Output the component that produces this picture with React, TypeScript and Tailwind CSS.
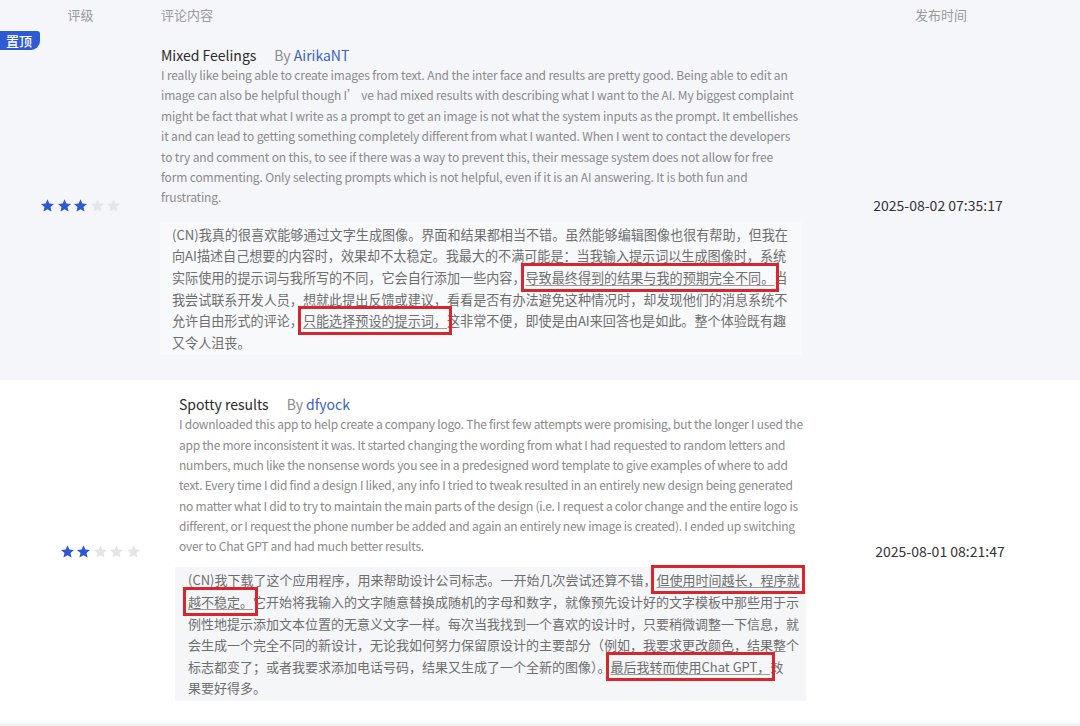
type Seg = { t: string; hl?: boolean };

type Review = {
  title: string;
  author: string;
  rating: number;
  date: string;
  pinned?: boolean;
  en: string[];
  cn: Seg[][];
};

const reviews: Review[] = [
  {
    title: "Mixed Feelings",
    author: "AirikaNT",
    rating: 3,
    date: "2025-08-02 07:35:17",
    pinned: true,
    en: [
      "I really like being able to create images from text. And the inter face and results are pretty good. Being able to edit an",
      "image can also be helpful though I’ ve had mixed results with describing what I want to the AI. My biggest complaint",
      "might be fact that what I write as a prompt to get an image is not what the system inputs as the prompt. It embellishes",
      "it and can lead to getting something completely different from what I wanted. When I went to contact the developers",
      "to try and comment on this, to see if there was a way to prevent this, their message system does not allow for free",
      "form commenting. Only selecting prompts which is not helpful, even if it is an AI answering. It is both fun and",
      "frustrating.",
    ],
    cn: [
      [{ t: "(CN)我真的很喜欢能够通过文字生成图像。界面和结果都相当不错。虽然能够编辑图像也很有帮助，但我在" }],
      [{ t: "向AI描述自己想要的内容时，效果却不太稳定。我最大的不满可能是：当我输入提示词以生成图像时，系统" }],
      [
        { t: "实际使用的提示词与我所写的不同，它会自行添加一些内容，" },
        { t: "导致最终得到的结果与我的预期完全不同。", hl: true },
        { t: "当" },
      ],
      [{ t: "我尝试联系开发人员，想就此提出反馈或建议，看看是否有办法避免这种情况时，却发现他们的消息系统不" }],
      [
        { t: "允许自由形式的评论，" },
        { t: "只能选择预设的提示词，", hl: true },
        { t: "这非常不便，即使是由AI来回答也是如此。整个体验既有趣" },
      ],
      [{ t: "又令人沮丧。" }],
    ],
  },
  {
    title: "Spotty results",
    author: "dfyock",
    rating: 2,
    date: "2025-08-01 08:21:47",
    en: [
      "I downloaded this app to help create a company logo. The first few attempts were promising, but the longer I used the",
      "app the more inconsistent it was. It started changing the wording from what I had requested to random letters and",
      "numbers, much like the nonsense words you see in a predesigned word template to give examples of where to add",
      "text. Every time I did find a design I liked, any info I tried to tweak resulted in an entirely new design being generated",
      "no matter what I did to try to maintain the main parts of the design (i.e. I request a color change and the entire logo is",
      "different, or I request the phone number be added and again an entirely new image is created). I ended up switching",
      "over to Chat GPT and had much better results.",
    ],
    cn: [
      [
        { t: "(CN)我下载了这个应用程序，用来帮助设计公司标志。一开始几次尝试还算不错，" },
        { t: "但使用时间越长，程序就", hl: true },
      ],
      [
        { t: "越不稳定。", hl: true },
        { t: "它开始将我输入的文字随意替换成随机的字母和数字，就像预先设计好的文字模板中那些用于示" },
      ],
      [{ t: "例性地提示添加文本位置的无意义文字一样。每次当我找到一个喜欢的设计时，只要稍微调整一下信息，就" }],
      [{ t: "会生成一个完全不同的新设计，无论我如何努力保留原设计的主要部分（例如，我要求更改颜色，结果整个" }],
      [
        { t: "标志都变了；或者我要求添加电话号码，结果又生成了一个全新的图像）。" },
        { t: "最后我转而使用Chat GPT，", hl: true },
        { t: "效" },
      ],
      [{ t: "果要好得多。" }],
    ],
  },
];

function Stars({ value }: { value: number }) {
  return (
    <div className="flex gap-[1.5px]">
      {[1, 2, 3, 4, 5].map((i) => (
        <svg
          key={i}
          viewBox="0 0 24 24"
          className={i <= value ? "h-[15px] w-[15px] fill-[#2d57d3]" : "h-[15px] w-[15px] fill-[#e3e5ea]"}
        >
          <path d="M12 1.8l3 6.9 7.4.7-5.6 4.9 1.7 7.3L12 17.8l-6.5 3.8 1.7-7.3-5.6-4.9 7.4-.7z" />
        </svg>
      ))}
    </div>
  );
}

function ReviewRow({ r, second }: { r: Review; second?: boolean }) {
  return (
    <div
      className={
        second
          ? "relative flex bg-white border-b-4 border-[#f1f2f5]"
          : "relative flex bg-[#f5f6fa]"
      }
    >
      {r.pinned && (
        <div className="absolute left-0 top-[1px] rounded-tr-[3px] rounded-br-[9px] bg-[#2e5ad4] pl-[6px] pr-[8px] text-[13px] font-medium leading-[19px] text-white">
          置顶
        </div>
      )}
      <div className={second ? "flex w-[179px] shrink-0 items-center justify-center pl-[21px]" : "flex w-[161px] shrink-0 items-center justify-center"}>
        <Stars value={r.rating} />
      </div>
      <div className={second ? "w-[627px] shrink-0 pt-[14px] pb-[22px]" : "w-[641px] shrink-0 pt-[15px] pb-[25px]"}>
        <div className="flex items-baseline gap-[18px] leading-[20px]">
          <span className="text-[14px] text-[#2b2b2b]">{r.title}</span>
          <span className="text-[14px] text-[#8c8c8c]">
            By <span className="text-[#3a62c6]">{r.author}</span>
          </span>
        </div>
        <div
          className={
            second
              ? "text-[12px] leading-[20.3px] tracking-[-0.25px] text-[#8a8a8a]"
              : "text-[12px] leading-[20.4px] tracking-[-0.15px] text-[#8a8a8a]"
          }
        >
          {r.en.map((l, i) => (
            <div key={i} className="whitespace-nowrap">
              {l}
            </div>
          ))}
        </div>
        <div
          className={
            second
              ? "mt-[11px] -ml-1 w-[631px] bg-[#f5f6f8] py-[2px] pl-[13px] text-[13px] leading-[21.6px] text-[#6e6e6e]"
              : "mt-[14px] -ml-px w-[642px] bg-[#f8f9fb] py-[2px] pl-[12px] text-[13.1px] leading-[21.6px] text-[#6e6e6e]"
          }
        >
          {r.cn.map((line, i) => (
            <div key={i} className="whitespace-nowrap">
              {line.map((s, j) =>
                s.hl ? (
                  <span key={j} className="underline decoration-[#9a9a9a] underline-offset-2 outline-3 outline-offset-2 outline-[#d7262d]">
                    {s.t}
                  </span>
                ) : (
                  <span key={j}>{s.t}</span>
                )
              )}
            </div>
          ))}
        </div>
      </div>
      <div className="flex flex-1 items-center justify-center pr-[6px] text-[14px] text-[#333]">
        {r.date}
      </div>
    </div>
  );
}

export default function App() {
  return (
    <div className="h-[726px] w-[1080px] overflow-hidden bg-white font-['Noto_Sans_CJK_SC',sans-serif]">
      <div className="flex h-[30px] items-center bg-[#f5f6fa] text-[13px] text-[#999]">
        <div className="w-[161px] text-center">评级</div>
        <div className="w-[641px]">评论内容</div>
        <div className="flex-1 text-center">发布时间</div>
      </div>
      {reviews.map((r, i) => (
        <ReviewRow key={i} r={r} second={i === 1} />
      ))}
    </div>
  );
}
